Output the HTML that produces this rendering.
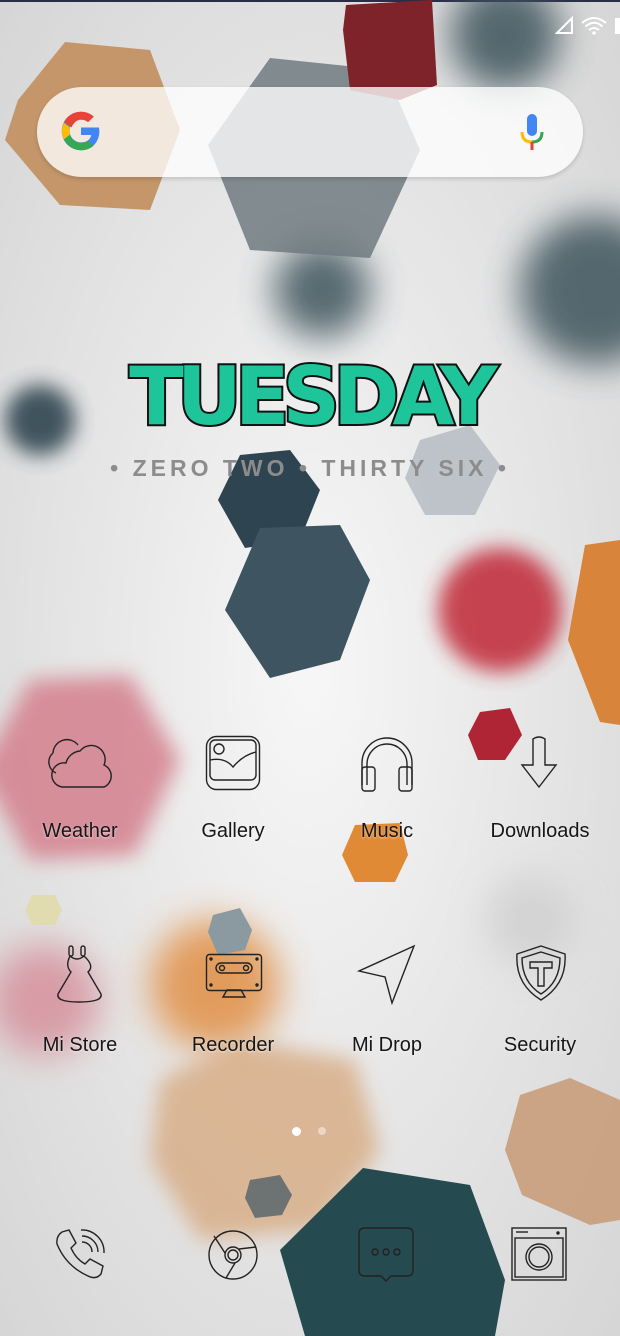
<!DOCTYPE html>
<html><head><meta charset="utf-8"><style>
html,body{margin:0;padding:0}
body{width:620px;height:1336px;position:relative;overflow:hidden;background:#e6e6e6;font-family:"Liberation Sans",sans-serif}
svg.bg{position:absolute;left:0;top:0}
.lbl{position:absolute;width:160px;text-align:center;font-size:20px;color:#161616;text-shadow:0 1px 2px rgba(255,255,255,.6)}
.ic{position:absolute}
.search{position:absolute;left:37px;top:87px;width:546px;height:90px;border-radius:45px;background:rgba(255,255,255,.78);box-shadow:0 2px 4px rgba(0,0,0,.15)}
.tue{position:absolute;left:0;width:620px;top:350px;text-align:center;font-family:"DejaVu Sans","Liberation Sans",sans-serif;font-weight:bold;font-size:80px;letter-spacing:-7px;color:#1ec49a;-webkit-text-stroke:4px #111;paint-order:stroke fill}
.sub{position:absolute;left:0;width:620px;top:455px;text-align:center;font-size:23px;letter-spacing:4px;color:#8c8c8c;font-weight:bold}
</style></head><body>
<svg class="bg" width="620" height="1336" viewBox="0 0 620 1336">
<defs>
<filter id="b1" x="-50%" y="-50%" width="200%" height="200%"><feGaussianBlur stdDeviation="18"/></filter>
<filter id="b2" x="-50%" y="-50%" width="200%" height="200%"><feGaussianBlur stdDeviation="10"/></filter>
<radialGradient id="g0" cx="50%" cy="50%" r="70%"><stop offset="0" stop-color="#f7f7f7"/><stop offset="1" stop-color="#d6d6d6"/></radialGradient>
</defs>
<rect width="620" height="1336" fill="url(#g0)"/>
<rect y="0" width="620" height="2" fill="#2a2d45"/>
<circle cx="505" cy="35" r="55" fill="#3e525c" filter="url(#b1)" opacity=".85"/>
<circle cx="595" cy="290" r="75" fill="#3e525c" filter="url(#b1)" opacity=".85"/>
<circle cx="322" cy="290" r="48" fill="#3e525c" filter="url(#b1)" opacity=".85"/>
<circle cx="40" cy="420" r="35" fill="#2e4450" filter="url(#b2)" opacity=".9"/>
<circle cx="500" cy="610" r="62" fill="#c23040" filter="url(#b2)" opacity=".9"/>
<polygon points="30,680 130,675 180,760 135,855 30,860 -20,770" fill="#d4808d" filter="url(#b2)" opacity=".85"/>
<circle cx="45" cy="1000" r="55" fill="#d4808d" filter="url(#b1)" opacity=".7"/>
<circle cx="215" cy="985" r="65" fill="#e0893a" filter="url(#b1)" opacity=".8"/>
<polygon points="160,1080 240,1040 355,1060 380,1150 320,1230 200,1240 150,1160" fill="#d8ae88" filter="url(#b2)" opacity=".85"/>
<circle cx="530" cy="920" r="45" fill="#c8c8c8" filter="url(#b1)" opacity=".6"/>
<polygon points="18,100 65,42 150,50 180,130 150,210 60,205 5,140" fill="#c4966a"/>
<polygon points="270,58 385,70 420,150 370,258 250,250 208,145" fill="#6f7a80" opacity=".85"/>
<polygon points="346,5 432,0 437,85 400,100 350,90 343,30" fill="#7e2329"/>
<polygon points="240,455 290,450 320,490 300,540 245,548 218,500" fill="#2e4450"/>
<polygon points="260,528 340,525 370,580 340,660 270,678 225,610" fill="#3e5460"/>
<polygon points="420,440 470,425 500,465 475,515 425,515 405,478" fill="#b8bfc4" opacity=".9"/>
<polygon points="585,545 620,540 620,725 600,722 568,640" fill="#d8843a"/>
<polygon points="480,712 510,708 522,735 505,760 478,760 468,735" fill="#b02535"/>
<polygon points="355,825 400,823 408,855 395,882 355,882 342,855" fill="#e08a35"/>
<polygon points="32,895 55,895 62,910 55,925 32,925 25,910" fill="#e0dcb0"/>
<polygon points="213,915 240,908 252,930 245,950 218,955 208,932" fill="#8a9aa0"/>
<polygon points="250,1180 280,1175 292,1195 282,1215 255,1218 245,1198" fill="#6d7272"/>
<polygon points="520,1095 570,1078 620,1100 620,1220 590,1225 522,1195 505,1150" fill="#c8a080" opacity=".95"/>
<polygon points="280,1250 363,1168 470,1185 505,1280 495,1336 305,1336" fill="#254a50"/>
</svg>

<svg class="ic" style="left:555px;top:14px" width="65" height="22" viewBox="0 0 65 22">
<path d="M2 19 L17 4 L17 19 Z" fill="none" stroke="#fff" stroke-width="2"/>
<path d="M27 9 Q39 -1 51 9" fill="none" stroke="#fff" stroke-width="2"/>
<path d="M30.5 12.5 Q39 5 47.5 12.5" fill="none" stroke="#fff" stroke-width="2"/>
<path d="M34 16 Q39 12 44 16" fill="none" stroke="#fff" stroke-width="2"/>
<circle cx="39" cy="19" r="1.8" fill="#fff"/>
<rect x="60" y="4" width="6" height="16" fill="#fff"/>
</svg>

<div class="search"></div>
<svg class="ic" style="left:60px;top:110px" width="42" height="42" viewBox="0 0 48 48">
<path d="M44.5 20H24v8.5h11.8C34.7 33.9 30.1 37 24 37c-7.2 0-13-5.8-13-13s5.8-13 13-13c3.1 0 5.9 1.1 8.1 2.9l6.4-6.4C34.6 4.1 29.6 2 24 2 11.8 2 2 11.8 2 24s9.8 22 22 22c11 0 21-8 21-22 0-1.3-.2-2.7-.5-4z" fill="#4285F4"/>
<path d="M6.3 14.7l7 5.1C15.2 15.1 19.3 11 24 11c3.1 0 5.9 1.1 8.1 2.9l6.4-6.4C34.6 4.1 29.6 2 24 2 15.6 2 8.4 6.8 4.6 13.7z" fill="#EA4335"/>
<path d="M24 46c5.5 0 10.5-1.8 14.4-5.2l-6.8-5.6C29.6 36.6 27 37.5 24 37.5c-6 0-10.7-3.9-12.6-9.3l-7 5.4C8.2 40.9 15.5 46 24 46z" fill="#34A853"/>
<path d="M11.4 28.1C11 26.8 10.8 25.4 10.8 24s.2-2.8.6-4.1l-7-5.4C3 17.4 2 20.6 2 24s1 6.6 2.4 9.5z" fill="#FBBC05"/>
</svg>
<svg class="ic" style="left:517px;top:112px" width="30" height="40" viewBox="0 0 30 40">
<rect x="10" y="2" width="10" height="22" rx="5" fill="#4285F4"/>
<path d="M5 20 Q5 30 15 30" fill="none" stroke="#FBBC05" stroke-width="3"/>
<path d="M25 20 Q25 30 15 30" fill="none" stroke="#34A853" stroke-width="3"/>
<rect x="13.5" y="30" width="3" height="8" fill="#EA4335"/>
</svg>

<div class="tue">TUESDAY</div>
<div class="sub">• ZERO TWO • THIRTY SIX •</div>

<svg class="ic" style="left:48px;top:733px" width="64" height="60" viewBox="0 0 64 60" fill="none" stroke="#222" stroke-width="1.4">
<path d="M5 20 A14 14 0 0 1 30 12"/>
<path d="M14 54 H56 A12 12 0 0 0 56 32 A14 14 0 0 0 32 18 A16 16 0 0 0 18 30 A12 12 0 0 0 14 54 Z"/>
<path d="M5 20 A12 12 0 0 0 8 40"/>
</svg>
<svg class="ic" style="left:205px;top:735px" width="56" height="56" viewBox="0 0 56 56" fill="none" stroke="#222" stroke-width="1.4">
<rect x="1.5" y="1.5" width="53" height="53" rx="10"/>
<rect x="5" y="5" width="46" height="40" rx="5"/>
<circle cx="14" cy="14" r="5"/>
<path d="M5 25 Q20 22 28 32 Q38 20 51 17"/>
</svg>
<svg class="ic" style="left:358px;top:733px" width="58" height="60" viewBox="0 0 58 60" fill="none" stroke="#222" stroke-width="1.4">
<path d="M4 52 V30 A25 25 0 0 1 54 30 V52"/>
<path d="M9 52 V31 A20 20 0 0 1 49 31 V52"/>
<rect x="4" y="34" width="13" height="24" rx="3"/>
<rect x="41" y="34" width="13" height="24" rx="3"/>
</svg>
<svg class="ic" style="left:518px;top:735px" width="42" height="56" viewBox="0 0 42 56" fill="none" stroke="#222" stroke-width="1.4">
<path d="M15 4 Q21 0 27 4 V30 H38 L21 52 L4 30 H15 Z"/>
</svg>
<div class="lbl" style="left:0;top:820px">Weather</div>
<div class="lbl" style="left:153px;top:820px">Gallery</div>
<div class="lbl" style="left:307px;top:820px">Music</div>
<div class="lbl" style="left:460px;top:820px">Downloads</div>

<svg class="ic" style="left:53px;top:944px" width="54" height="62" viewBox="0 0 54 62" fill="none" stroke="#222" stroke-width="1.4">
<rect x="16" y="2" width="4" height="10" rx="2"/><rect x="28" y="2" width="4" height="10" rx="2"/>
<path d="M17 12 Q12 22 18 28 L5 50 Q3 58 26 58 Q50 58 48 50 L35 28 Q42 22 31 12 Q24 18 17 12 Z"/>
</svg>
<svg class="ic" style="left:205px;top:953px" width="58" height="46" viewBox="0 0 58 46" fill="none" stroke="#222" stroke-width="1.4">
<rect x="1.5" y="1.5" width="55" height="36" rx="3"/>
<rect x="11" y="10" width="36" height="10" rx="5"/>
<circle cx="17" cy="15" r="2.5"/><circle cx="41" cy="15" r="2.5"/>
<path d="M18 44 L22 37 H36 L40 44 Z"/>
<circle cx="6" cy="6" r="1" fill="#222"/><circle cx="52" cy="6" r="1" fill="#222"/><circle cx="6" cy="32" r="1" fill="#222"/><circle cx="52" cy="32" r="1" fill="#222"/>
</svg>
<svg class="ic" style="left:357px;top:943px" width="60" height="62" viewBox="0 0 60 62" fill="none" stroke="#222" stroke-width="1.4">
<path d="M57 3 L2 28 L28 34 L35 60 Z"/>
</svg>
<svg class="ic" style="left:515px;top:944px" width="52" height="58" viewBox="0 0 52 58" fill="none" stroke="#222" stroke-width="1.4">
<path d="M26 2 L50 10 Q52 40 26 56 Q0 40 2 10 Z"/>
<path d="M26 8 L45 14 Q45 38 26 50 Q7 38 7 14 Z"/>
<path d="M15 18 H37 V24 H29 V42 H23 V24 H15 Z"/>
</svg>
<div class="lbl" style="left:0;top:1034px">Mi Store</div>
<div class="lbl" style="left:153px;top:1034px">Recorder</div>
<div class="lbl" style="left:307px;top:1034px">Mi Drop</div>
<div class="lbl" style="left:460px;top:1034px">Security</div>

<div style="position:absolute;left:292px;top:1127px;width:9px;height:9px;border-radius:50%;background:#fff"></div>
<div style="position:absolute;left:318px;top:1127px;width:8px;height:8px;border-radius:50%;background:rgba(255,255,255,.45)"></div>

<svg class="ic" style="left:52px;top:1226px" width="56" height="56" viewBox="0 0 56 56" fill="none" stroke="#222" stroke-width="1.4">
<path d="M10 6 L17 4 L24 17 L19 22 Q24 33 33 38 L38 33 L51 40 L49 48 Q44 54 36 50 Q14 40 5 18 Q4 10 10 6 Z"/>
<path d="M30 10 A16 16 0 0 1 46 26"/><path d="M29 4 A22 22 0 0 1 52 27"/><path d="M30 16 A10 10 0 0 1 40 26"/>
</svg>
<svg class="ic" style="left:206px;top:1228px" width="54" height="54" viewBox="0 0 54 54" fill="none" stroke="#222" stroke-width="1.4">
<circle cx="27" cy="27" r="24"/><circle cx="27" cy="27" r="8"/><circle cx="27" cy="27" r="5"/>
<path d="M19 25 L8 8"/><path d="M33 21 L50 19"/><path d="M29 35 L20 50"/>
</svg>
<svg class="ic" style="left:357px;top:1226px" width="58" height="58" viewBox="0 0 58 58" fill="none" stroke="#222" stroke-width="1.4">
<path d="M8 2 H50 Q56 2 56 8 V44 Q56 50 50 50 H34 L29 55 L24 50 H8 Q2 50 2 44 V8 Q2 2 8 2 Z"/>
<circle cx="18" cy="26" r="3"/><circle cx="29" cy="26" r="3"/><circle cx="40" cy="26" r="3"/>
</svg>
<svg class="ic" style="left:510px;top:1226px" width="58" height="56" viewBox="0 0 58 56" fill="none" stroke="#222" stroke-width="1.4">
<rect x="2" y="2" width="54" height="52"/><rect x="5" y="12" width="48" height="39"/>
<path d="M6 6 H18"/><circle cx="48" cy="7" r="1" fill="#222"/>
<circle cx="29" cy="31" r="13"/><circle cx="29" cy="31" r="10"/>
</svg>
</body></html>
